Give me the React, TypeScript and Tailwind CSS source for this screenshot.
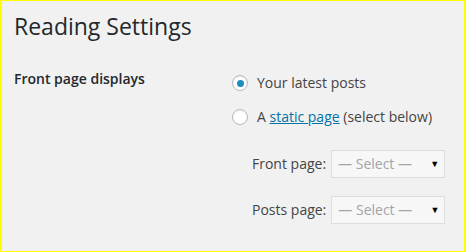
import React from "react";

const font = { fontFamily: '"Open Sans", "Noto Sans", sans-serif' };

function Radio({ checked }: { checked?: boolean }) {
  return (
    <span className="flex h-4 w-4 shrink-0 items-center justify-center rounded-full border border-[#b4b9be] bg-white shadow-[inset_0_1px_2px_rgba(0,0,0,0.07)]">
      {checked && <span className="h-[7px] w-[7px] rounded-full bg-[#1e8cbe]" />}
    </span>
  );
}

function Select() {
  return (
    <div className="flex h-[28px] w-[114px] items-center justify-between border border-[#dddddd] bg-[#f7f7f7] pl-[6px] pr-[5px] text-[14px] text-[#a0a5aa]">
      <span>— Select —</span>
      <span className="text-[9px] text-black">▼</span>
    </div>
  );
}

export default function App() {
  return (
    <div
      className="box-border h-[252px] w-[466px] border-x-2 border-y border-[#ffff00] bg-[#f1f1f1] pl-[12px] text-[#444]"
      style={font}
    >
      <h1 className="pt-[11px] text-[23px] font-normal leading-[29px] text-[#23282d]">Reading Settings</h1>
      <div className="mt-[28px] flex">
        <div className="w-[218px] shrink-0 text-[14px] font-semibold leading-[20px] text-[#23282d]">
          Front page displays
        </div>
        <div className="mt-[4px] flex flex-col text-[14px] leading-[20px]">
          <div className="flex items-center gap-[9px]">
            <Radio checked />
            <span>Your latest posts</span>
          </div>
          <div className="mt-[14px] flex items-center gap-[9px]">
            <Radio />
            <span>
              A <span className="text-[#0073aa] underline">static page</span> (select below)
            </span>
          </div>
          <div className="ml-[20px] mt-[23px] flex flex-col gap-[18px]">
            <div className="flex items-center gap-[5px]">
              <span>Front page:</span>
              <Select />
            </div>
            <div className="flex items-center gap-[5px]">
              <span>Posts page:</span>
              <Select />
            </div>
          </div>
        </div>
      </div>
    </div>
  );
}
